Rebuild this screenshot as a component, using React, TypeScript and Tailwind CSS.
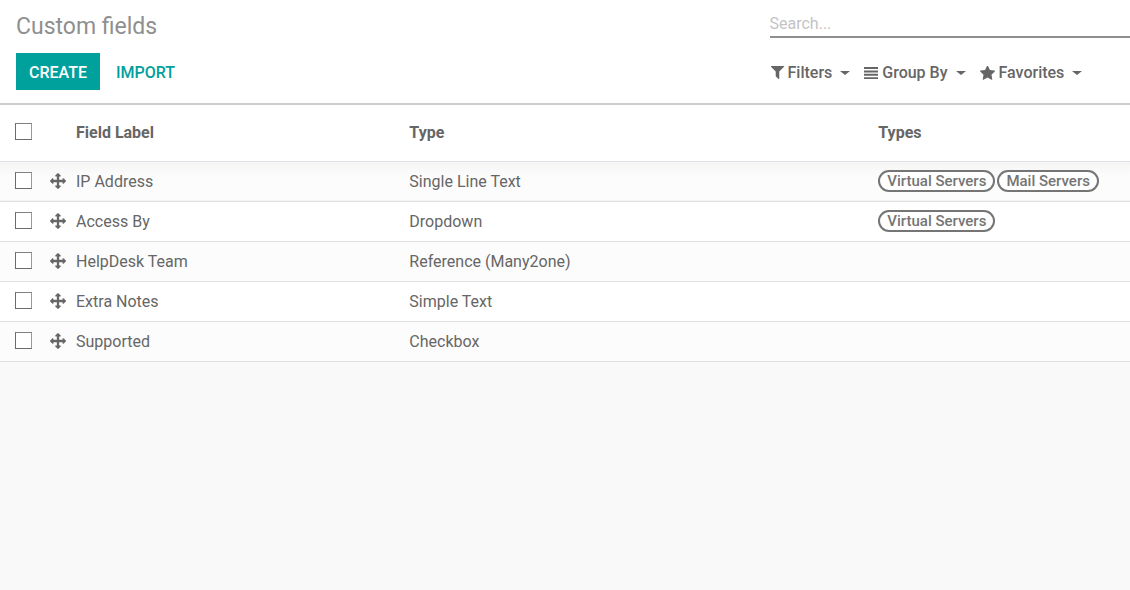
import { useState } from "react";

type Field = {
  label: string;
  type: string;
  tags: string[];
};

const fields: Field[] = [
  { label: "IP Address", type: "Single Line Text", tags: ["Virtual Servers", "Mail Servers"] },
  { label: "Access By", type: "Dropdown", tags: ["Virtual Servers"] },
  { label: "HelpDesk Team", type: "Reference (Many2one)", tags: [] },
  { label: "Extra Notes", type: "Simple Text", tags: [] },
  { label: "Supported", type: "Checkbox", tags: [] },
];

const icons = {
  filter:
    "M1595 295q17 41-14 70l-493 493v742q0 42-39 59-13 5-25 5-27 0-45-19l-256-256q-19-19-19-45v-486l-493-493q-31-29-14-70 17-39 59-39h1280q42 0 59 39z",
  lines: "M0 0h14v2H0zM0 3.4h14v2H0zM0 6.8h14v2H0zM0 10.2h14v2H0z",
  star: "M1728 647q0 22-26 48l-363 354 86 500q1 7 1 20 0 21-10.5 35.5t-30.5 14.5q-19 0-40-12l-449-236-449 236q-22 12-40 12-21 0-31.5-14.5t-10.5-35.5q0-6 2-20l86-500-364-354q-25-27-25-48 0-37 56-46l502-73 225-455q19-41 49-41t49 41l225 455 502 73q56 9 56 46z",
  arrows:
    "M1792 896q0 26-19 45l-256 256q-19 19-45 19t-45-19-19-45v-128h-384v384h128q26 0 45 19t19 45-19 45l-256 256q-19 19-45 19t-45-19l-256-256q-19-19-19-45t19-45 45-19h128v-384h-384v128q0 26-19 45t-45 19-45-19l-256-256q-19-19-19-45t19-45l256-256q19-19 45-19t45 19 19 45v128h384v-384h-128q-26 0-45-19t-19-45 19-45l256-256q19-19 45-19t45 19l256 256q19 19 19 45t-19 45-45 19h-128v384h384v-128q0-26 19-45t45-19 45 19l256 256q19 19 19 45z",
};

function Icon({ path, className, viewBox = "0 0 1792 1792" }: { path: string; className: string; viewBox?: string }) {
  return (
    <svg viewBox={viewBox} aria-hidden="true" className={`shrink-0 fill-current ${className}`}>
      <path d={path} />
    </svg>
  );
}

const menus = [
  { label: "Filters", icon: icons.filter, viewBox: "192 256 1408 1408", size: "size-[13px]" },
  { label: "Group By", icon: icons.lines, viewBox: "0 0 14 12", size: "h-3 w-3.5" },
  { label: "Favorites", icon: icons.star, viewBox: "64 100 1664 1530", size: "h-3.5 w-[15px]" },
];

const checkboxClass =
  "block size-[17px] appearance-none border border-[#6b6b6b] border-t-[#808080] border-r-[#999999] bg-white checked:bg-[#00a09d]";

export default function App() {
  const [selected, setSelected] = useState<string[]>([]);

  const toggle = (label: string) =>
    setSelected((current) =>
      current.includes(label) ? current.filter((item) => item !== label) : [...current, label],
    );

  return (
    <div className="min-h-screen bg-[#f9f9f9] font-[Roboto,sans-serif] text-base text-[#666666]">
      <header className="grid grid-cols-[68.1%_1fr] border-b-2 border-[#cccccc] bg-white pt-2 pb-3">
        <div className="pl-4">
          <h1 className="text-[23px] leading-[38px] text-[#8f8f8f]">Custom fields</h1>
          <div className="mt-[7px] flex items-center gap-1">
            <button type="button" className="h-[37px] bg-[#00a09d] px-[13px] pt-0.5 font-medium text-white">
              CREATE
            </button>
            <button type="button" className="h-[37px] px-3 pt-0.5 font-medium text-[#00a09d]">
              IMPORT
            </button>
          </div>
        </div>
        <div>
          <input
            type="search"
            aria-label="Search"
            placeholder="Search..."
            className="block h-[30px] w-full border-b-2 border-[#8f8f8f] pt-0.5 outline-none placeholder:text-[#c4c4c4]"
          />
          <div className="mt-4 flex items-center gap-3.5 pl-px">
            {menus.map((menu) => (
              <button
                key={menu.label}
                type="button"
                aria-haspopup="menu"
                className="flex h-[37px] items-center gap-1 font-medium"
              >
                <Icon path={menu.icon} viewBox={menu.viewBox} className={menu.size} />
                {menu.label}
                <span className="ml-1 border-x-[5px] border-t-4 border-x-transparent border-t-current" />
              </button>
            ))}
          </div>
        </div>
      </header>

      <table className="w-full table-fixed border-collapse text-left">
        <colgroup>
          <col className="w-[42px]" />
          <col className="w-[34px]" />
          <col className="w-[29.5%]" />
          <col className="w-[41.5%]" />
          <col />
        </colgroup>
        <thead className="bg-white">
          <tr className="h-14 border-b border-[#dee2e6]">
            <th className="pb-0.5 pl-[15px]">
              <input
                type="checkbox"
                aria-label="Select all"
                className={checkboxClass}
                checked={selected.length === fields.length}
                onChange={(event) => setSelected(event.target.checked ? fields.map((field) => field.label) : [])}
              />
            </th>
            <td />
            <th className="font-bold">Field Label</th>
            <th className="font-bold">Type</th>
            <th className="font-bold">Types</th>
          </tr>
        </thead>
        <tbody>
          {fields.map((field) => (
            <tr
              key={field.label}
              className="h-10 border-b border-[#e0e0e0] odd:bg-[#fcfcfc] even:bg-white first:bg-linear-to-b first:from-[#f4f4f4] first:to-[#fcfcfc] first:to-40%"
            >
              <td className="pb-0.5 pl-[15px]">
                <input
                  type="checkbox"
                  aria-label={`Select ${field.label}`}
                  className={checkboxClass}
                  checked={selected.includes(field.label)}
                  onChange={() => toggle(field.label)}
                />
              </td>
              <td className="pl-2">
                <Icon path={icons.arrows} className="size-4" />
              </td>
              <td className="pt-0.5">{field.label}</td>
              <td className="pt-0.5">{field.type}</td>
              <td>
                <div className="flex gap-0.5 whitespace-nowrap">
                  {field.tags.map((tag) => (
                    <span
                      key={tag}
                      className="rounded-full border-2 border-[#757575] bg-white px-[7px] text-[15px] leading-[18px] font-medium text-[#757575]"
                    >
                      {tag}
                    </span>
                  ))}
                </div>
              </td>
            </tr>
          ))}
        </tbody>
      </table>
    </div>
  );
}
